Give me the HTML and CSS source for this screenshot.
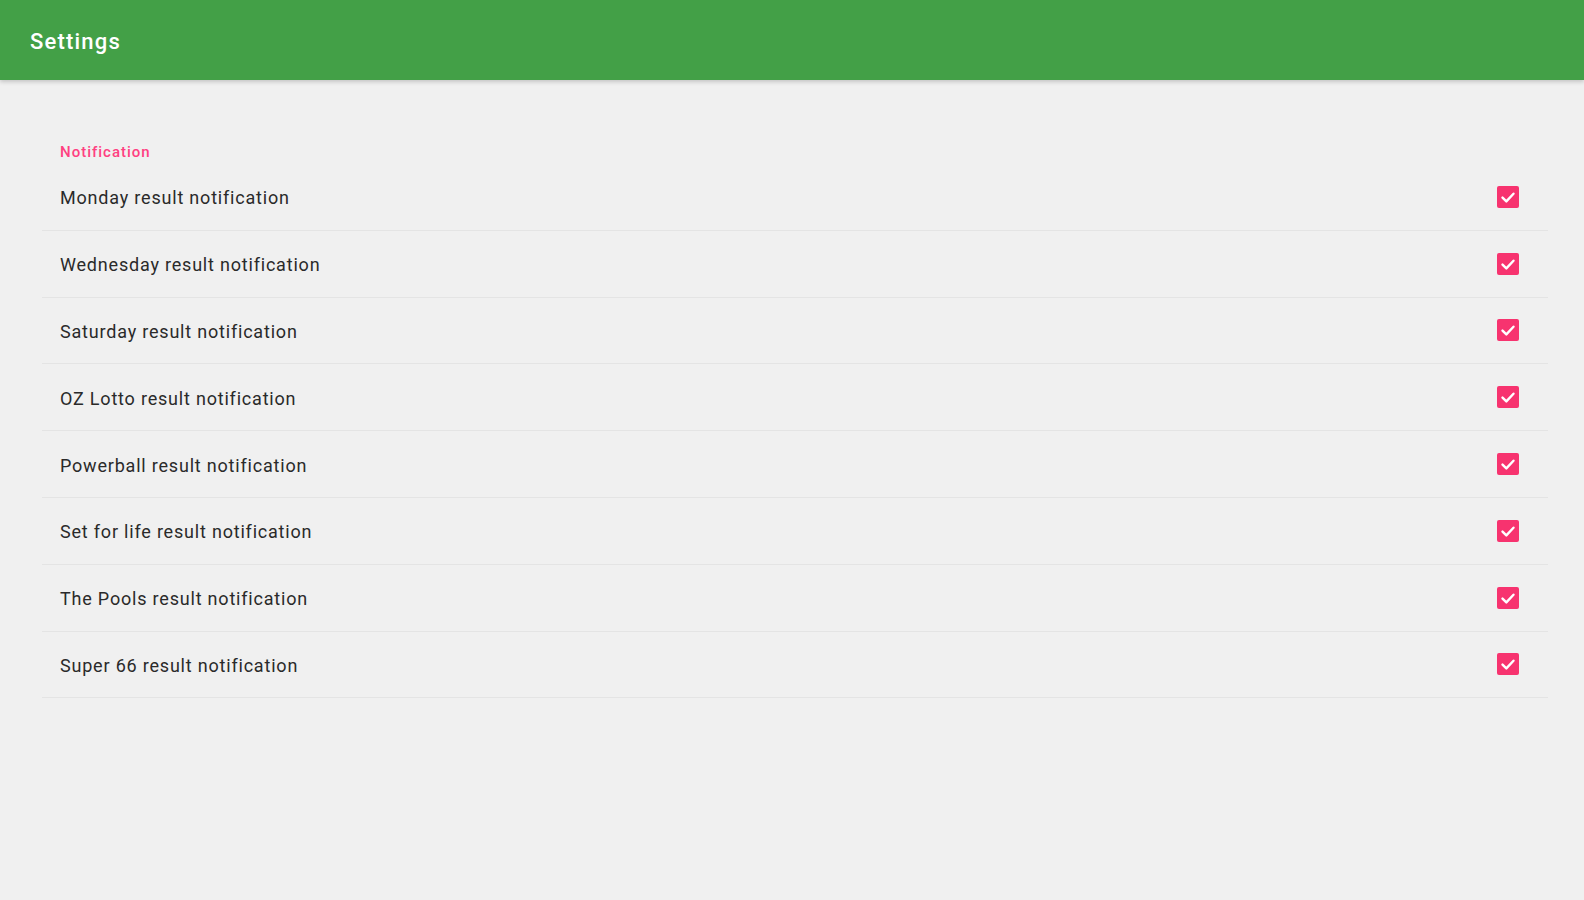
FILE: index.html
```html
<!DOCTYPE html>
<html>
<head>
<meta charset="utf-8">
<link rel="stylesheet" href="styles.css">
</head>
<body>
<header class="appbar"><span class="title">Settings</span></header>
<main class="content">
  <section class="group">
    <div class="group-title">Notification</div>
    <div class="row"><span class="label">Monday result notification</span><span class="check"><svg viewBox="0 0 20 20"><path d="M5 10.5 L8.5 14 L15 7"/></svg></span></div>
    <div class="row"><span class="label">Wednesday result notification</span><span class="check"><svg viewBox="0 0 20 20"><path d="M5 10.5 L8.5 14 L15 7"/></svg></span></div>
    <div class="row"><span class="label">Saturday result notification</span><span class="check"><svg viewBox="0 0 20 20"><path d="M5 10.5 L8.5 14 L15 7"/></svg></span></div>
    <div class="row"><span class="label">OZ Lotto result notification</span><span class="check"><svg viewBox="0 0 20 20"><path d="M5 10.5 L8.5 14 L15 7"/></svg></span></div>
    <div class="row"><span class="label">Powerball result notification</span><span class="check"><svg viewBox="0 0 20 20"><path d="M5 10.5 L8.5 14 L15 7"/></svg></span></div>
    <div class="row"><span class="label">Set for life result notification</span><span class="check"><svg viewBox="0 0 20 20"><path d="M5 10.5 L8.5 14 L15 7"/></svg></span></div>
    <div class="row"><span class="label">The Pools result notification</span><span class="check"><svg viewBox="0 0 20 20"><path d="M5 10.5 L8.5 14 L15 7"/></svg></span></div>
    <div class="row"><span class="label">Super 66 result notification</span><span class="check"><svg viewBox="0 0 20 20"><path d="M5 10.5 L8.5 14 L15 7"/></svg></span></div>
  </section>
</main>
</body>
</html>
```
FILE: styles.css
```css
html, body {
  margin: 0;
  padding: 0;
  background: #f0f0f0;
  font-family: Roboto, "Liberation Sans", sans-serif;
}
.appbar {
  height: 80px;
  background: #43a047;
  display: flex;
  align-items: center;
  padding-left: 30px;
  box-shadow: 0 2px 4px rgba(0,0,0,0.18);
  position: relative;
}
.title {
  color: #fff;
  font-size: 22px;
  font-weight: 500;
  letter-spacing: 1.2px;
  margin-top: 2px;
}
.content {
  padding: 62px 36px 0 42px;
}
.group-title {
  color: #ff4081;
  font-size: 15px;
  line-height: 20px;
  padding-left: 18px;
  font-weight: 500;
  letter-spacing: 1px;
  margin-bottom: 2px;
}
.row {
  height: 65.8px;
  border-bottom: 1px solid #e4e4e4;
  display: flex;
  align-items: center;
  justify-content: space-between;
  padding: 0 29px 0 18px;
}
.label {
  color: #2a2a2a;
  font-size: 18px;
  letter-spacing: 0.8px;
  padding-top: 2px;
}
.check {
  width: 22px;
  height: 22px;
  border-radius: 2px;
  background: #f7336f;
  display: flex;
}
.check svg {
  width: 22px;
  height: 22px;
  fill: none;
  stroke: #fff;
  stroke-width: 2.2;
  stroke-linecap: round;
  stroke-linejoin: round;
}
```
